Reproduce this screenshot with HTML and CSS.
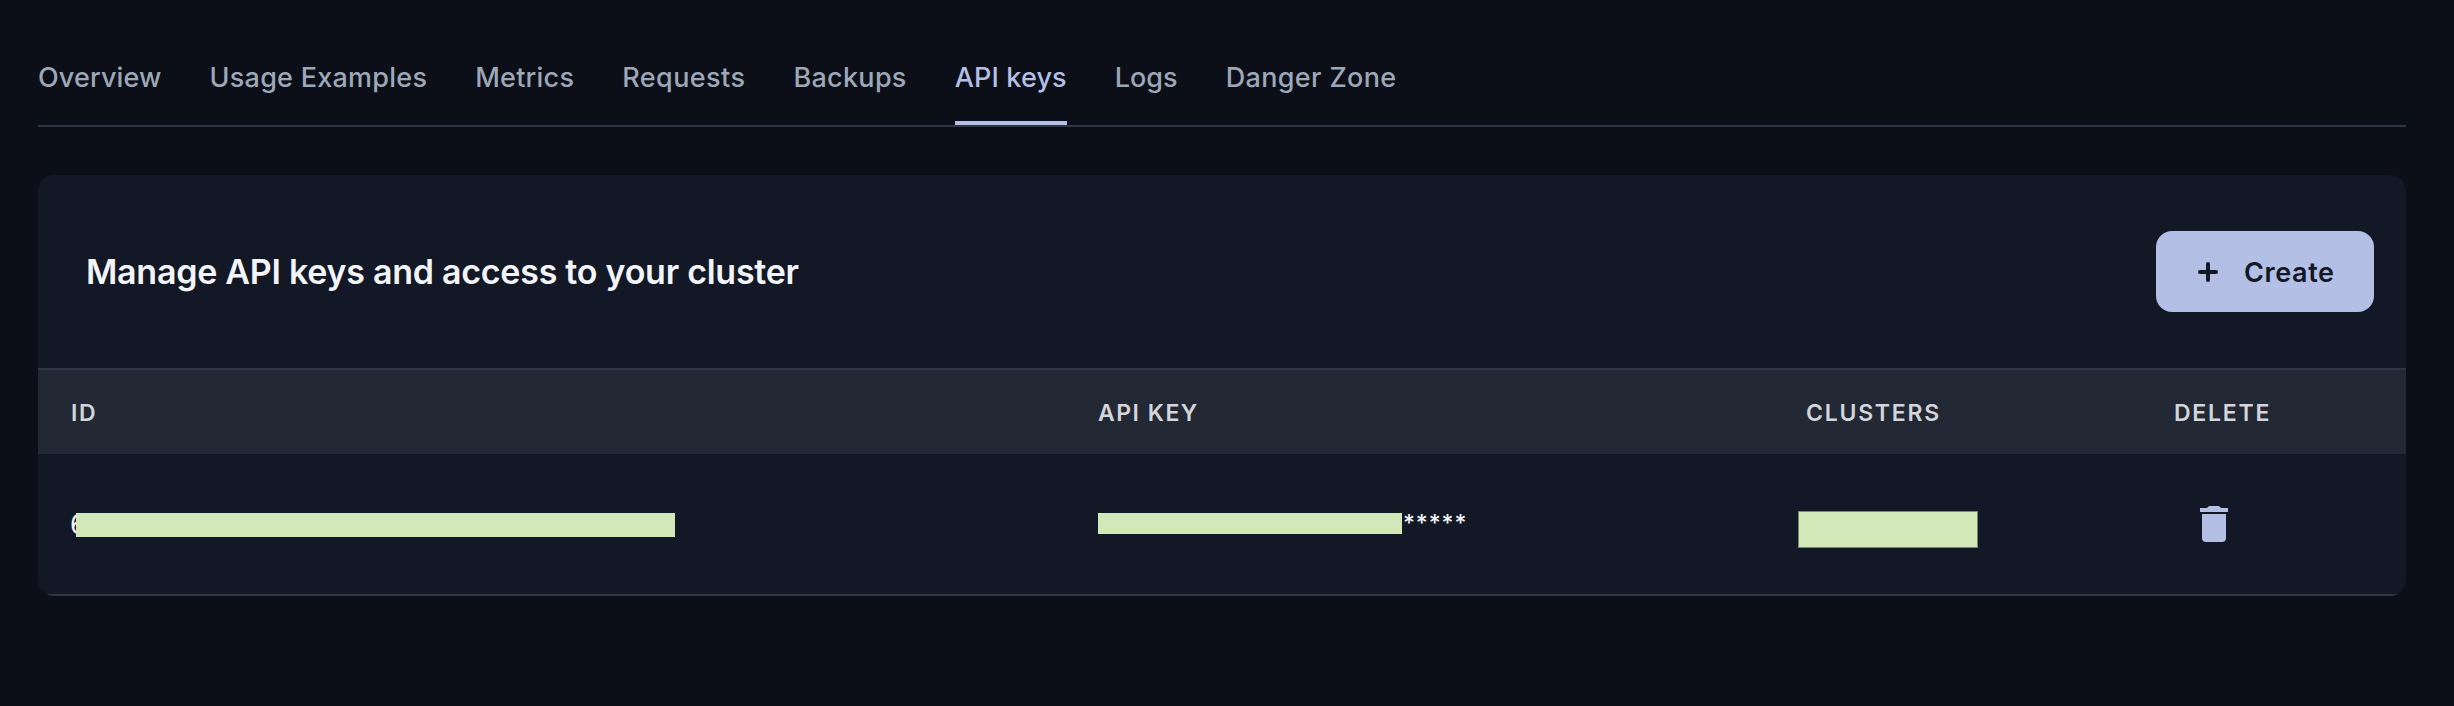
FILE: index.html
```html
<!DOCTYPE html>
<html lang="en">
<head>
<meta charset="utf-8">
<title>API keys</title>
<link rel="stylesheet" href="styles.css">
</head>
<body>
<nav class="tabs">
  <a class="tab tab-overview">Overview</a>
  <a class="tab tab-usage">Usage Examples</a>
  <a class="tab tab-metrics">Metrics</a>
  <a class="tab tab-requests">Requests</a>
  <a class="tab tab-backups">Backups</a>
  <a class="tab tab-active">API keys</a>
  <a class="tab">Logs</a>
  <a class="tab tab-danger">Danger Zone</a>
</nav>
<main class="card">
  <header class="card-header">
    <h1 class="title">Manage API keys and access to your cluster</h1>
    <button class="create">
      <svg class="plus" viewBox="0 0 20 20"><path d="M10 2v16M2 10h16" stroke="currentColor" stroke-width="4" stroke-linecap="round"/></svg>
      <span class="create-label">Create</span>
    </button>
  </header>
  <div class="row row-head">
    <div class="th th-id">ID</div>
    <div class="th th-key">API KEY</div>
    <div class="th th-clusters">CLUSTERS</div>
    <div class="th">DELETE</div>
  </div>
  <div class="row row-body">
    <div class="cell"><span class="id-text">6</span><span class="mask mask-id"></span></div>
    <div class="cell"><span class="mask mask-key"></span><span class="stars">*****</span></div>
    <div class="cell cell-cluster"><span class="mask mask-cluster"></span></div>
    <div class="cell cell-delete">
      <svg class="trash" viewBox="0 0 28 36"><path d="M0 2h7l2-2h10l2 2h7v4H0zM2 8h24v24a4 4 0 0 1-4 4H6a4 4 0 0 1-4-4z" fill="currentColor"/></svg>
    </div>
  </div>
</main>
</body>
</html>
```
FILE: styles.css
```css
* { box-sizing: border-box; }
body {
  margin: 0;
  min-height: 706px;
  padding: 0 48px 0 38px;
  background: #0c0f17;
  font-family: Inter, "Liberation Sans", sans-serif;
  color: #f3f4f9;
}

/* Tabs */
.tabs {
  display: flex;
  gap: 48px;
  height: 127px;
  border-bottom: 2px solid #2f3545;
}
.tab {
  height: 125px;
  padding-top: 61px;
  font-size: 27px;
  line-height: 34px;
  font-weight: 500;
  color: #9ca8b8;
  white-space: nowrap;
}
.tab-overview { letter-spacing: 0.12px; }
.tab-usage { letter-spacing: 0.25px; }
.tab-metrics { letter-spacing: 0.23px; }
.tab-requests { letter-spacing: 0.42px; }
.tab-backups { letter-spacing: 0.3px; }
.tab-danger { letter-spacing: 0.36px; }
.tab-active {
  color: #b3bfe5;
  letter-spacing: 0.14px;
  border-bottom: 4px solid #b3bfe5;
}

/* Card */
.card {
  margin-top: 48px;
  background: #121826;
  border-radius: 16px;
  overflow: hidden;
}
.card-header {
  display: flex;
  justify-content: space-between;
  align-items: center;
  height: 193px;
  padding: 0 32px 0 48px;
}
.title {
  margin: 0;
  font-size: 34px;
  line-height: 44px;
  font-weight: 600;
  letter-spacing: -0.26px;
  white-space: nowrap;
}
.create {
  display: flex;
  align-items: center;
  width: 218px;
  height: 81px;
  padding: 0 0 0 42px;
  border: 0;
  border-radius: 16px;
  background: #b3bfe5;
  color: #121826;
  font-family: inherit;
}
.plus { width: 20px; height: 20px; margin-right: 26px; }
.create-label {
  padding-top: 2px;
  font-size: 27px;
  line-height: 34px;
  font-weight: 600;
  letter-spacing: 0.6px;
}

/* Table */
.row {
  display: grid;
  grid-template-columns: 1028px 700px 376px 1fr;
  padding-left: 32px;
}
.row-head {
  align-items: center;
  height: 86px;
  border-top: 2px solid #2f3545;
  background: #222834;
}
.th {
  padding-top: 2px;
  font-size: 23px;
  font-weight: 600;
  letter-spacing: 1.75px;
  color: #d3d5da;
}
.th-id { padding-left: 1px; }
.th-key { letter-spacing: 1.5px; }
.th-clusters { padding-left: 8px; }
.row-body {
  height: 142px;
  border-bottom: 2px solid #2f3545;
}
.cell {
  display: flex;
  align-items: flex-start;
  padding-top: 59px;
}
.id-text {
  width: 6px;
  margin-top: -5px;
  font-size: 27px;
  line-height: 34px;
}
.stars {
  margin: -5px 0 0 1px;
  font-size: 23px;
  line-height: 30px;
  font-weight: 500;
  letter-spacing: 0.9px;
}
.mask { background: #d2e8b9; }
.mask-id { width: 599px; height: 24px; }
.mask-key { width: 304px; height: 21px; }
.mask-cluster { width: 180px; height: 37px; border: 1px solid #788872; }
.cell-cluster { padding-top: 57px; }
.cell-delete { padding: 52px 0 0 26px; }
.trash { width: 28px; height: 36px; color: #b3bfe5; }
```
